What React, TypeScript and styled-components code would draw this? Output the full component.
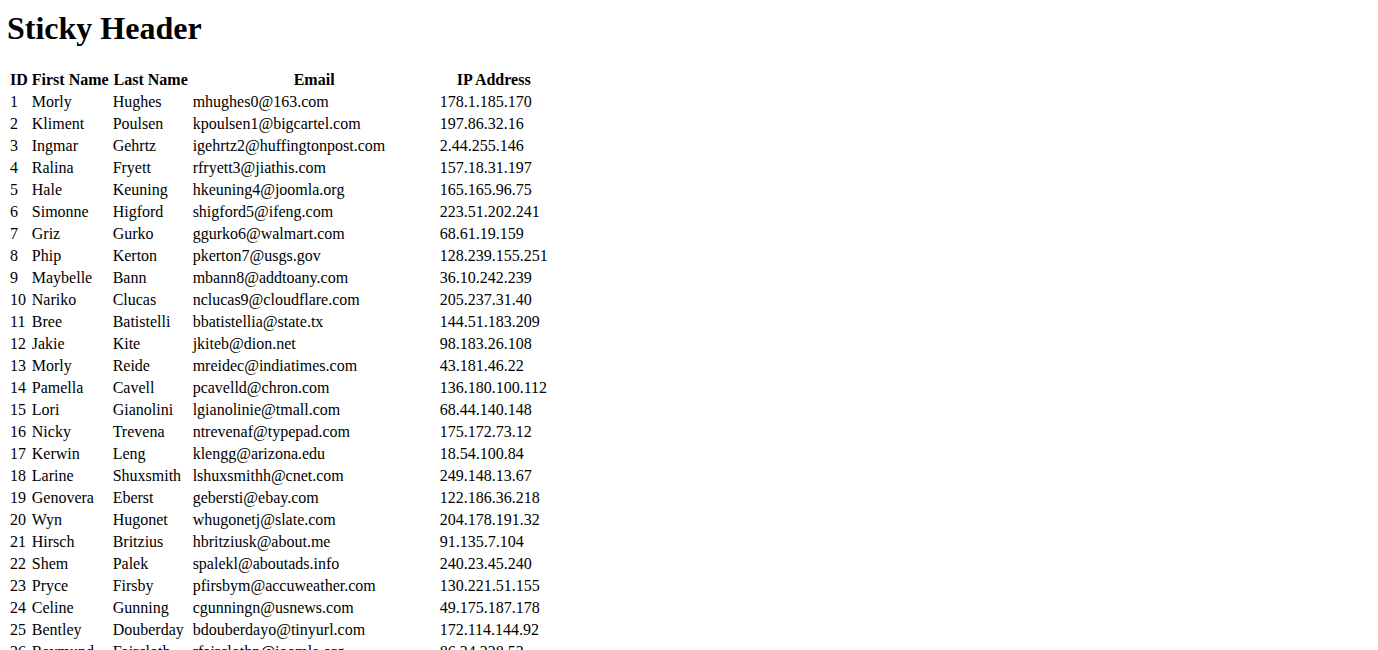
import React from 'react'
import styled, { createGlobalStyle } from 'styled-components'

const GlobalStyle = createGlobalStyle`
  body {
    margin: 0;
    font-family: "Liberation Serif", "Times New Roman", serif;
    font-size: 16px;
    color: #000;
    background: #fff;
  }
`

const Page = styled.div`
  padding: 0 7px;
  display: flow-root;
`

const Title = styled.h1`
  font-size: 2em;
  font-weight: bold;
  margin: 9.5px 0 21.44px;
`

const Table = styled.table`
  border-collapse: separate;
  border-spacing: 2px;
`

const HeadCell = styled.th`
  position: sticky;
  top: 0;
  background: #fff;
  padding: 1px;
  font-weight: bold;
  text-align: center;
`

const Cell = styled.td<{ $min?: number }>`
  padding: 1px;
  text-align: left;
  white-space: nowrap;
  min-width: ${p => (p.$min ? `${p.$min}px` : '0')};
`

interface Person {
  id: number
  first: string
  last: string
  email: string
  ip: string
}

const rows: Person[] = [
  { id: 1, first: 'Morly', last: 'Hughes', email: 'mhughes0@163.com', ip: '178.1.185.170' },
  { id: 2, first: 'Kliment', last: 'Poulsen', email: 'kpoulsen1@bigcartel.com', ip: '197.86.32.16' },
  { id: 3, first: 'Ingmar', last: 'Gehrtz', email: 'igehrtz2@huffingtonpost.com', ip: '2.44.255.146' },
  { id: 4, first: 'Ralina', last: 'Fryett', email: 'rfryett3@jiathis.com', ip: '157.18.31.197' },
  { id: 5, first: 'Hale', last: 'Keuning', email: 'hkeuning4@joomla.org', ip: '165.165.96.75' },
  { id: 6, first: 'Simonne', last: 'Higford', email: 'shigford5@ifeng.com', ip: '223.51.202.241' },
  { id: 7, first: 'Griz', last: 'Gurko', email: 'ggurko6@walmart.com', ip: '68.61.19.159' },
  { id: 8, first: 'Phip', last: 'Kerton', email: 'pkerton7@usgs.gov', ip: '128.239.155.251' },
  { id: 9, first: 'Maybelle', last: 'Bann', email: 'mbann8@addtoany.com', ip: '36.10.242.239' },
  { id: 10, first: 'Nariko', last: 'Clucas', email: 'nclucas9@cloudflare.com', ip: '205.237.31.40' },
  { id: 11, first: 'Bree', last: 'Batistelli', email: 'bbatistellia@state.tx', ip: '144.51.183.209' },
  { id: 12, first: 'Jakie', last: 'Kite', email: 'jkiteb@dion.net', ip: '98.183.26.108' },
  { id: 13, first: 'Morly', last: 'Reide', email: 'mreidec@indiatimes.com', ip: '43.181.46.22' },
  { id: 14, first: 'Pamella', last: 'Cavell', email: 'pcavelld@chron.com', ip: '136.180.100.112' },
  { id: 15, first: 'Lori', last: 'Gianolini', email: 'lgianolinie@tmall.com', ip: '68.44.140.148' },
  { id: 16, first: 'Nicky', last: 'Trevena', email: 'ntrevenaf@typepad.com', ip: '175.172.73.12' },
  { id: 17, first: 'Kerwin', last: 'Leng', email: 'klengg@arizona.edu', ip: '18.54.100.84' },
  { id: 18, first: 'Larine', last: 'Shuxsmith', email: 'lshuxsmithh@cnet.com', ip: '249.148.13.67' },
  { id: 19, first: 'Genovera', last: 'Eberst', email: 'gebersti@ebay.com', ip: '122.186.36.218' },
  { id: 20, first: 'Wyn', last: 'Hugonet', email: 'whugonetj@slate.com', ip: '204.178.191.32' },
  { id: 21, first: 'Hirsch', last: 'Britzius', email: 'hbritziusk@about.me', ip: '91.135.7.104' },
  { id: 22, first: 'Shem', last: 'Palek', email: 'spalekl@aboutads.info', ip: '240.23.45.240' },
  { id: 23, first: 'Pryce', last: 'Firsby', email: 'pfirsbym@accuweather.com', ip: '130.221.51.155' },
  { id: 24, first: 'Celine', last: 'Gunning', email: 'cgunningn@usnews.com', ip: '49.175.187.178' },
  { id: 25, first: 'Bentley', last: 'Douberday', email: 'bdouberdayo@tinyurl.com', ip: '172.114.144.92' },
  { id: 26, first: 'Raymund', last: 'Faircloth', email: 'rfairclothp@joomla.org', ip: '86.24.228.53' },
  { id: 27, first: 'Ardis', last: 'Tremmel', email: 'atremmelq@bloglovin.com', ip: '31.92.14.201' },
  { id: 28, first: 'Cordy', last: 'Mabbs', email: 'cmabbsr@google.co.uk', ip: '112.40.77.19' },
]

const App = () => {
  return <Page>
    <GlobalStyle />
    <Title>Sticky Header</Title>
    <Table>
      <thead>
        <tr>
          <HeadCell>ID</HeadCell>
          <HeadCell>First Name</HeadCell>
          <HeadCell>Last Name</HeadCell>
          <HeadCell>Email</HeadCell>
          <HeadCell>IP Address</HeadCell>
        </tr>
      </thead>
      <tbody>
        {rows.map(r => (
          <tr key={r.id}>
            <Cell>{r.id}</Cell>
            <Cell>{r.first}</Cell>
            <Cell $min={76}>{r.last}</Cell>
            <Cell $min={243}>{r.email}</Cell>
            <Cell>{r.ip}</Cell>
          </tr>
        ))}
      </tbody>
    </Table>
  </Page>
}

export default App
